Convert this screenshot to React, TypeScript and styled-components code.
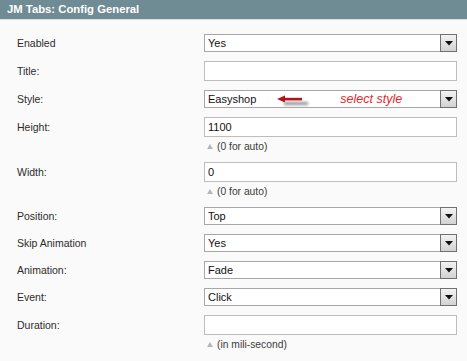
import styled, { createGlobalStyle } from 'styled-components';

const GlobalStyle = createGlobalStyle`
  html, body {
    margin: 0;
    padding: 0;
    background: #fafafa;
  }
  body {
    font-family: 'Liberation Sans', Arial, sans-serif;
  }
`;

type Field =
  | { kind: 'select'; label: string; value: string; note?: string; hint?: boolean }
  | { kind: 'input'; label: string; value: string; note?: string };

const fields: Field[] = [
  { kind: 'select', label: 'Enabled', value: 'Yes' },
  { kind: 'input', label: 'Title:', value: '' },
  { kind: 'select', label: 'Style:', value: 'Easyshop', hint: true },
  { kind: 'input', label: 'Height:', value: '1100', note: '(0 for auto)' },
  { kind: 'input', label: 'Width:', value: '0', note: '(0 for auto)' },
  { kind: 'select', label: 'Position:', value: 'Top' },
  { kind: 'select', label: 'Skip Animation', value: 'Yes' },
  { kind: 'select', label: 'Animation:', value: 'Fade' },
  { kind: 'select', label: 'Event:', value: 'Click' },
  { kind: 'input', label: 'Duration:', value: '', note: '(in mili-second)' },
];

const App = () => {
  return (
    <Panel>
      <GlobalStyle />
      <Header>JM Tabs: Config General</Header>
      <Form>
        {fields.map((f) => (
          <Row key={f.label}>
            <Label $h={f.kind === 'select' ? 18 : 20}>{f.label}</Label>
            <FieldCol>
              {f.kind === 'select' ? (
                <SelectBox>
                  <Value>{f.value}</Value>
                  {f.hint && (
                    <>
                      <HintArrow width="36" height="16" viewBox="0 0 36 16">
                        <defs>
                          <filter id="blur" x="-20%" y="-60%" width="140%" height="220%">
                            <feGaussianBlur stdDeviation="1.7" />
                          </filter>
                        </defs>
                        <rect x="8" y="11" width="24" height="3" fill="#8e8e8e" filter="url(#blur)" />
                        <rect x="7" y="6.8" width="19" height="2.6" fill="#b3131c" />
                        <polygon points="1,8.1 9,4.6 9,11.6" fill="#b3131c" />
                      </HintArrow>
                      <HintText>select style</HintText>
                    </>
                  )}
                  <DropButton>
                    <svg width="8" height="5" viewBox="0 0 8 5">
                      <polygon points="0,0 8,0 4,4.5" fill="#111" />
                    </svg>
                  </DropButton>
                </SelectBox>
              ) : (
                <TextInput>{f.value}</TextInput>
              )}
              {f.note && (
                <Note>
                  <NoteMark />
                  {f.note}
                </Note>
              )}
            </FieldCol>
          </Row>
        ))}
      </Form>
    </Panel>
  );
};

const Panel = styled.div`
  width: 467px;
  min-height: 361px;
  background: #fafafa;
`;

const Header = styled.div`
  height: 19px;
  line-height: 19px;
  padding-left: 7px;
  background: #6f8b94;
  color: #fff;
  font-size: 11.3px;
  font-weight: bold;
  border-bottom: 1px solid #dcdfe0;
`;

const Form = styled.div`
  padding: 14px 0 0 17px;
`;

const Row = styled.div`
  display: flex;
  margin-bottom: 9px;
`;

const Label = styled.div<{ $h: number }>`
  width: 187px;
  flex-shrink: 0;
  line-height: ${(p) => p.$h}px;
  font-size: 10.5px;
  color: #2b2b2b;
`;

const FieldCol = styled.div`
  width: 253px;
  display: flex;
  flex-direction: column;
`;

const SelectBox = styled.div`
  box-sizing: border-box;
  height: 18px;
  display: flex;
  align-items: center;
  border: 1px solid #a7a7a7;
  border-right: none;
  background: #fff;
  padding-left: 3px;
`;

const Value = styled.span`
  font-size: 11px;
  color: #111;
  line-height: 16px;
`;

const HintArrow = styled.svg`
  margin-left: 20px;
  flex-shrink: 0;
`;

const HintText = styled.span`
  margin-left: 28px;
  font-size: 12.5px;
  font-style: italic;
  color: #e8262d;
  line-height: 16px;
`;

const DropButton = styled.div`
  box-sizing: border-box;
  margin-left: auto;
  align-self: stretch;
  margin-top: -1px;
  margin-bottom: -1px;
  width: 17px;
  border: 1px solid #707070;
  background: linear-gradient(#f3f3f3, #d2d2d2);
  display: flex;
  align-items: center;
  justify-content: center;
  padding-top: 1px;
`;

const TextInput = styled.div`
  box-sizing: border-box;
  height: 20px;
  line-height: 18px;
  border: 1px solid #bdbdbd;
  background: #fff;
  padding-left: 3px;
  font-size: 11px;
  color: #111;
`;

const Note = styled.div`
  box-sizing: border-box;
  height: 16px;
  display: flex;
  align-items: center;
  gap: 4px;
  padding: 3px 0 0 3px;
  font-size: 10.3px;
  color: #3a3a3a;
`;

const NoteMark = styled.span`
  width: 0;
  height: 0;
  border-left: 3px solid transparent;
  border-right: 3px solid transparent;
  border-bottom: 5px solid #b5b5b5;
`;

export default App;
